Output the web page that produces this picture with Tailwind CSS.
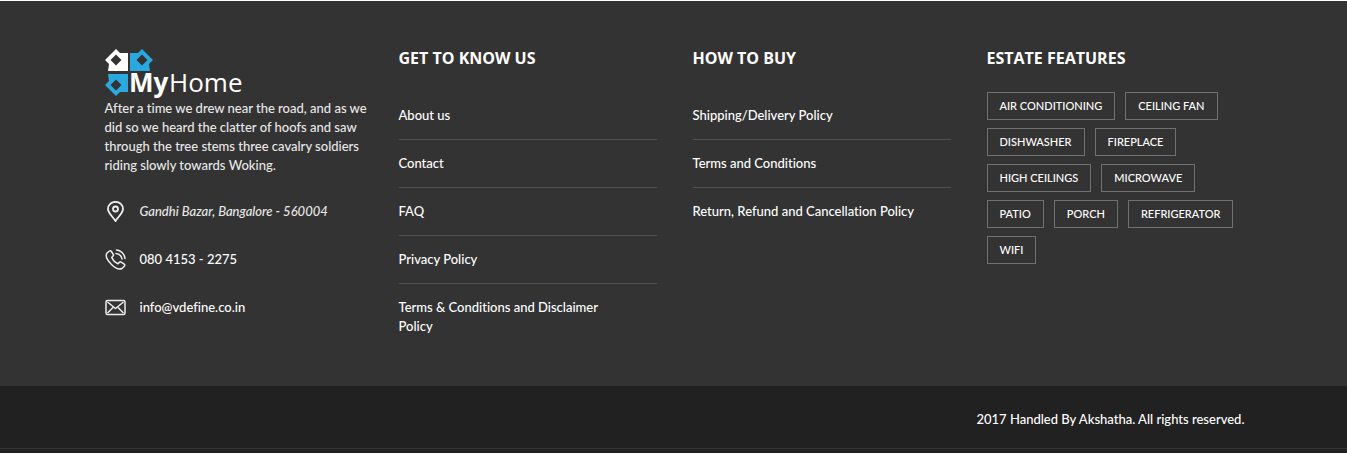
<!DOCTYPE html>
<html lang="en">
<head>
<meta charset="utf-8">
<meta name="viewport" content="width=device-width, initial-scale=1">
<title>MyHome</title>
<script src="https://cdn.jsdelivr.net/npm/@tailwindcss/browser@4"></script>
</head>
<body class="bg-white font-['Lato',sans-serif] text-[13px] leading-[19px] font-medium text-white [font-variant-ligatures:no-common-ligatures]">
<footer class="border-t border-white">
  <div class="bg-[#333333]">
    <div class="mx-auto grid max-w-[1176px] grid-cols-1 gap-9 pt-12 pr-[17px] pb-[50px] pl-[19px] sm:grid-cols-2 lg:grid-cols-4">
      <section>
        <a href="#" aria-label="MyHome" class="block h-[50px]">
          <svg viewBox="0 0 150 60" class="h-[60px] w-[150px]" aria-hidden="true">
            <path fill="#fff" fill-rule="evenodd" d="M11 0 0 11l4 4-1 7h20V4h-8ZM11 5.500l5.500 5.500-5.500 5.500L5.500 11Z"/>
            <path fill="#29a9e0" fill-rule="evenodd" d="M37 0 48 11l-4 4 1 7H25V4h8ZM37 5.500l-5.500 5.500 5.500 5.500 5.500-5.500Z"/>
            <path fill="#29a9e0" fill-rule="evenodd" d="M11 47 0 36l4-4-1-7h20v18h-8ZM11 41.500l5.500-5.500-5.500-5.500L5.500 36Z"/>
            <text x="24" y="43" fill="#fff" font-family="Open Sans, sans-serif" font-size="26" font-weight="700">My</text>
            <text x="64" y="43" fill="#fff" font-family="Open Sans, sans-serif" font-size="26">Home</text>
          </svg>
        </a>
        <p class="-mr-2 text-[#e8e8e8]">After a time we drew near the road, and as we did so we heard the clatter of hoofs and saw through the tree stems three cavalry soldiers riding slowly towards Woking.</p>
        <ul class="mt-[26px] space-y-[27px]">
          <li class="flex items-center gap-[14px]">
            <svg viewBox="0 0 21 21" class="size-[21px] shrink-0" fill="none" stroke="#eee" stroke-width="1.8" aria-hidden="true"><path d="M10.500 20C8 16 3 12 3 8a7.500 7.200 0 0 1 15 0c0 4-5 8-7.500 12Z"/><circle cx="10.500" cy="8" r="2.500"/></svg>
            <address class="italic text-[#e8e8e8]">Gandhi Bazar, Bangalore - 560004</address>
          </li>
          <li class="flex items-center gap-[14px]">
            <svg viewBox="0 0 21 21" class="size-[21px] shrink-0" fill="none" stroke="#eee" stroke-width="1.500" stroke-linecap="round" stroke-linejoin="round" aria-hidden="true"><path d="M4.500 2 2 4c-2 3 1 8 4.500 11.500S14 21 17 19.500l2.500-2.500c.5-.7.3-1.300-.3-1.800l-3-2c-.7-.5-1.300-.4-1.800.2l-1.400 1.400c-2.500-1-5-3.500-6.300-6.300L8 7c.6-.5.6-1.100.2-1.800L6.200 2.300C5.700 1.600 5.100 1.500 4.500 2Z"/><path d="M11.500 1c4 .3 8 3.500 8.500 8.500M11 4.500c3 .3 5.500 2.500 6 5.500"/></svg>
            <a href="tel:08041532275">080 4153 - 2275</a>
          </li>
          <li class="flex items-center gap-[14px]">
            <svg viewBox="0 0 21 21" class="size-[21px] shrink-0" fill="none" stroke="#eee" stroke-width="1.500" stroke-linejoin="round" aria-hidden="true"><rect x="1" y="3.500" width="19" height="14" rx="1.500"/><path d="m2.500 5 8 6.500 8-6.500M2.500 16 8 10.500M18.500 16 13 10.500"/></svg>
            <a href="mailto:info@vdefine.co.in">info@vdefine.co.in</a>
          </li>
        </ul>
      </section>
      <nav aria-labelledby="know">
        <h2 id="know" class="font-['Open_Sans',sans-serif] text-base leading-[18px] font-bold">GET TO KNOW US</h2>
        <ul class="mt-[25px] divide-y divide-[#505050]">
          <li class="py-[14px]"><a href="#">About us</a></li>
          <li class="py-[14px]"><a href="#">Contact</a></li>
          <li class="py-[14px]"><a href="#">FAQ</a></li>
          <li class="py-[14px]"><a href="#">Privacy Policy</a></li>
          <li class="pt-[14px] pr-8"><a href="#">Terms &amp; Conditions and Disclaimer Policy</a></li>
        </ul>
      </nav>
      <nav aria-labelledby="buy">
        <h2 id="buy" class="font-['Open_Sans',sans-serif] text-base leading-[18px] font-bold">HOW TO BUY</h2>
        <ul class="mt-[25px] divide-y divide-[#505050]">
          <li class="py-[14px]"><a href="#">Shipping/Delivery Policy</a></li>
          <li class="py-[14px]"><a href="#">Terms and Conditions</a></li>
          <li class="py-[14px]"><a href="#">Return, Refund and Cancellation Policy</a></li>
        </ul>
      </nav>
      <nav aria-labelledby="features">
        <h2 id="features" class="font-['Open_Sans',sans-serif] text-base leading-[18px] font-bold">ESTATE FEATURES</h2>
        <ul class="mt-[25px] flex flex-wrap gap-x-[10px] gap-y-2 text-[11px] leading-[26px]">
          <li><a href="#" class="block border border-[#707070] px-3">AIR CONDITIONING</a></li>
          <li><a href="#" class="block border border-[#707070] px-3">CEILING FAN</a></li>
          <li><a href="#" class="block border border-[#707070] px-3">DISHWASHER</a></li>
          <li><a href="#" class="block border border-[#707070] px-3">FIREPLACE</a></li>
          <li><a href="#" class="block border border-[#707070] px-3">HIGH CEILINGS</a></li>
          <li><a href="#" class="block border border-[#707070] px-3">MICROWAVE</a></li>
          <li><a href="#" class="block border border-[#707070] px-3">PATIO</a></li>
          <li><a href="#" class="block border border-[#707070] px-3">PORCH</a></li>
          <li><a href="#" class="block border border-[#707070] px-3">REFRIGERATOR</a></li>
          <li><a href="#" class="block border border-[#707070] px-3">WIFI</a></li>
        </ul>
      </nav>
    </div>
  </div>
  <div class="border-b-4 border-[#212121] bg-[#212121]">
    <div class="border-b border-[#333333] pt-6 pb-[19px]">
      <p class="mx-auto max-w-[1176px] pr-[17px] pl-[19px] text-right">2017 Handled By Akshatha. All rights reserved.</p>
    </div>
  </div>
</footer>
</body>
</html>
